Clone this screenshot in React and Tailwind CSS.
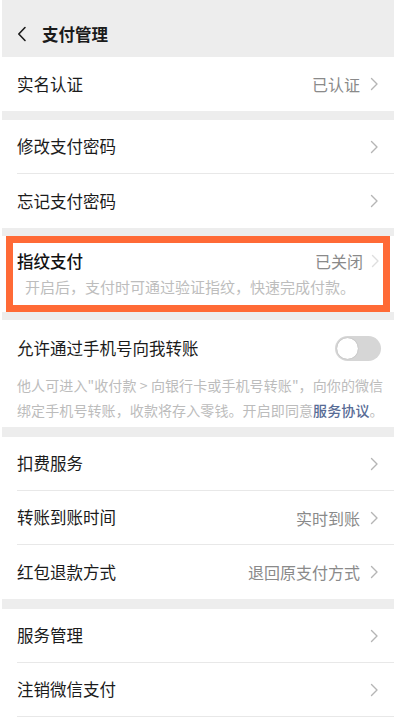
import React from "react";

const font = { fontFamily: '"Noto Sans CJK SC", "Noto Sans", sans-serif' };

function Chevron({ className = "" }) {
  return (
    <svg width="9" height="14" viewBox="0 0 9 14" className={className} fill="none">
      <path d="M1.5 1.5 L7 7 L1.5 12.5" stroke="currentColor" strokeWidth="1.4" strokeLinecap="round" strokeLinejoin="round" />
    </svg>
  );
}

function Row({ title, value, sep = false }) {
  return (
    <div className="bg-white pl-[15px]">
      <div className={`h-[54px] flex items-center pr-[15px] ${sep ? "border-b border-[#e8e8e8]" : ""}`}>
        <span className="flex-1 text-[16.5px] text-[#1b1b1b]">{title}</span>
        {value && <span className="text-[16px] text-[#8a8a8a] mr-[10px]">{value}</span>}
        <Chevron className="text-[#b5b5b5]" />
      </div>
    </div>
  );
}

function Gap({ h }) {
  return <div className={`bg-[#ededed] ${h}`} />;
}

export default function App() {
  return (
    <div className="w-[400px] h-[720px] bg-white overflow-hidden" style={font}>
      <div className="ml-[2px] w-[392px]">
        <div className="h-[57px] bg-[#ededed] flex items-center pt-[11px] pl-[15px]">
          <svg width="10" height="16" viewBox="0 0 10 16" fill="none" className="text-[#1b1b1b]">
            <path d="M8 1.5 L1.8 8 L8 14.5" stroke="currentColor" strokeWidth="1.6" strokeLinecap="round" strokeLinejoin="round" />
          </svg>
          <span className="ml-[15px] text-[16.5px] font-bold text-[#1b1b1b]">支付管理</span>
        </div>
        <Row title="实名认证" value="已认证" />
        <Gap h="h-[9px]" />
        <Row title="修改支付密码" sep />
        <Row title="忘记支付密码" />
        <Gap h="h-[8px]" />
        <div className="bg-white px-[4px] h-[76px]">
          <div className="h-full border-[7px] border-[#ff6a36] pl-[4px] pr-[3px] flex flex-col">
            <div className="flex items-center mt-[6px]">
              <span className="flex-1 text-[16.5px] text-[#111111] font-medium">指纹支付</span>
              <span className="text-[16px] text-[#8a8a8a] mr-[8px]">已关闭</span>
              <Chevron className="text-[#dedede]" />
            </div>
            <div className="mt-[3px] pl-[8px] text-[15px] text-[#bdbdbd] leading-[20px] whitespace-nowrap">
              开启后，支付时可通过验证指纹，快速完成付款。
            </div>
          </div>
        </div>
        <Gap h="h-[8px]" />
        <div className="bg-white h-[107px] pl-[15px] pr-[12px] pt-[15px]">
          <div className="flex items-center h-[26px]">
            <span className="flex-1 text-[16.5px] text-[#1b1b1b]">允许通过手机号向我转账</span>
            <div className="w-[46px] h-[25px] rounded-full bg-[#d6d6d6] p-[2px] mr-[1px]">
              <div className="w-[21px] h-[21px] rounded-full bg-white shadow-[0_0_1px_rgba(0,0,0,0.35)]" />
            </div>
          </div>
          <div className="mt-[12px] text-[14px] leading-[25px] text-[#bcbcbc] whitespace-nowrap tracking-[0.1px]">
            他人可进入"收付款 &gt; 向银行卡或手机号转账"，向你的微信
            <br />
            绑定手机号转账，收款将存入零钱。开启即同意<span className="text-[#576b95] font-medium">服务协议</span>。
          </div>
        </div>
        <Gap h="h-[10px]" />
        <Row title="扣费服务" sep />
        <Row title="转账到账时间" value="实时到账" sep />
        <Row title="红包退款方式" value="退回原支付方式" />
        <Gap h="h-[10px]" />
        <Row title="服务管理" sep />
        <Row title="注销微信支付" sep />
      </div>
    </div>
  );
}
